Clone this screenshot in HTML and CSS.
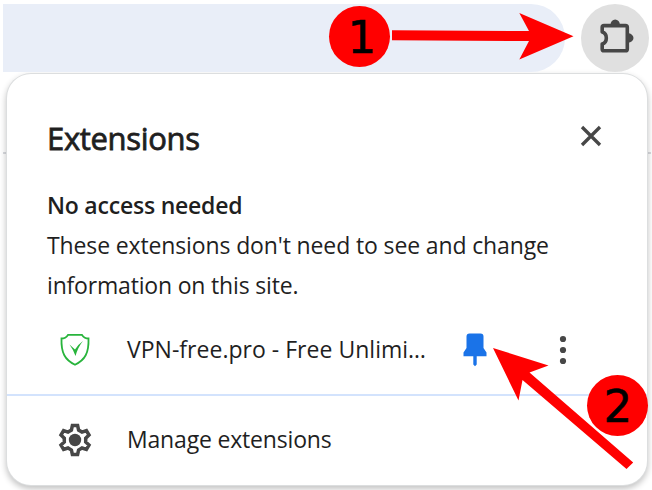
FILE: index.html
```html
<!DOCTYPE html>
<html lang="en">
<head>
<meta charset="utf-8">
<title>Extensions</title>
<link rel="stylesheet" href="styles.css">
</head>
<body>
<header class="toolbar">
  <div class="omnibox"></div>
  <div class="ext-button">
    <svg width="68" height="68" viewBox="581 4 68 68">
      <path d="M604 25.600h21.500q1.800 0 1.800 1.800v21.500q0 1.800-1.800 1.800h-21.500q-1.800 0-1.800-1.800v-5c5.500-1.500 5.500-10.500 0-12v-4.500q0-1.800 1.800-1.800z" fill="none" stroke="#474747" stroke-width="3.600" stroke-linejoin="round"/>
      <path d="M610.500 25a4.700 5.500 0 0 1 9.400 0zM628 33.300a5.500 4.700 0 0 1 0 9.400z" fill="#474747"/>
    </svg>
  </div>
</header>
<main class="popup">
  <div class="head">
    <h1>Extensions</h1>
    <svg class="close" width="24" height="24" viewBox="0 0 24 24"><path d="M3 3l18 18M21 3l-18 18" stroke="#474747" stroke-width="3.300"/></svg>
  </div>
  <section class="access">
    <h2>No access needed</h2>
    <p class="l1">These extensions don't need to see and change</p>
    <p class="l2">information on this site.</p>
  </section>
  <div class="row ext">
    <svg class="icon" width="34" height="36" viewBox="58 332 34 36">
      <path d="M75 364.700C65 360 61 353 61.500 338.500Q65.500 338.500 68 334.900H82Q84.500 338.500 88.500 338.500C89 353 85 360 75 364.700Z" fill="none" stroke="#28b43c" stroke-width="1.800"/>
      <path d="M69.500 344.500l5.500 5q3-5 8-8.500q-5 6-7.500 15q-2-6-6-11.500z" fill="#28b43c"/>
    </svg>
    <span class="label vpn">VPN-free.pro - Free Unlimi…</span>
    <svg class="pin" width="24" height="34" viewBox="463 333 24 34">
      <path d="M469.500 333.500h11q3 0 3 3V348l3 4.500v3.800h-9.800v8.200l-1.700 1.800-1.700-1.800v-8.200h-9.800v-3.800l3-4.500v-11.500q0-3 3-3z" fill="#1a73e8"/>
    </svg>
    <svg class="more" width="8" height="30" viewBox="0 0 8 30"><g fill="#474747"><circle cx="4" cy="4" r="3.100"/><circle cx="4" cy="15" r="3.100"/><circle cx="4" cy="26" r="3.100"/></g></svg>
  </div>
  <div class="row manage">
    <svg class="icon" width="34" height="36" viewBox="58 422 34 36">
      <path d="M72.400 425.500h5.200l1 4.600 3.400 2 4.400-1.500 2.600 4.400-3.300 3.200v3.700l3.300 3.200-2.600 4.300-4.400-1.400-3.400 2-1 4.500h-5.200l-1-4.500-3.400-2-4.400 1.400-2.600-4.300 3.300-3.200v-3.700l-3.300-3.200 2.600-4.400 4.400 1.500 3.400-2z" fill="none" stroke="#474747" stroke-width="3.500"/>
      <circle cx="75" cy="440" r="6.200" fill="#474747"/>
    </svg>
    <span class="label mng">Manage extensions</span>
  </div>
</main>
<div class="notes">
  <svg width="652" height="490" viewBox="0 0 652 490">
    <g fill="#f00">
      <circle cx="359.500" cy="36.500" r="30.500"/>
      <path d="M392 30.300L529 31 519.300 13 573.500 36.200 519.300 59.500 529 41 392 40.300z"/>
      <circle cx="617.500" cy="405.500" r="30.500"/>
      <path d="M493 348L548.500 365.500 529.500 372.500 633.200 462.500 626.500 469 522.500 380 518.500 400.500z"/>
    </g>
    <text class="num" x="347.500" y="52.500">1</text>
    <text class="num" x="603.500" y="422">2</text>
  </svg>
</div>
</body>
</html>
```
FILE: styles.css
```css
* { box-sizing: border-box; }
body {
  margin: 0;
  width: 652px;
  height: 490px;
  overflow: hidden;
  background: linear-gradient(#d9dbdf, #d9dbdf) 3px 152px / 648px 2px no-repeat #fff;
  color: #1f1f1f;
  font-family: "Open Sans", "Noto Sans", sans-serif;
  font-size: 23px;
}
.toolbar {
  display: flex;
  height: 73px;
  padding: 4px 3px 1px;
  justify-content: space-between;
}
.omnibox {
  width: 562px;
  height: 68px;
  border-radius: 0 34px 34px 0;
  background: #e9eef8;
}
.ext-button {
  width: 68px;
  height: 68px;
  border-radius: 50%;
  background: #e0e0e0;
}
.ext-button svg { display: block; }
.popup {
  width: 640px;
  height: 411px;
  margin: 1px 0 0 7px;
  border-radius: 24px;
  background: #fff;
  box-shadow: 0 0 0 1px #dcdedf, 0 3px 6px 1px rgba(0, 0, 0, .24);
}
.head {
  display: flex;
  height: 111px;
  padding: 44px 44px 0 40px;
  justify-content: space-between;
}
h1, h2, p { margin: 0; white-space: nowrap; }
h1 {
  font-size: 31px;
  line-height: 40px;
  font-weight: 400;
  letter-spacing: -.33px;
  -webkit-text-stroke: .8px #1f1f1f;
}
.close { margin-top: 6px; }
.access { padding-left: 40px; line-height: 40px; }
h2 { font-size: 23px; font-weight: 600; line-height: 40px; letter-spacing: -.22px; }
.l1 { letter-spacing: -.13px; }
.l2 { letter-spacing: -.18px; }
.row { display: flex; align-items: center; }
.ext { height: 91px; border-bottom: 2px solid #d3e3fd; }
.manage { height: 88px; }
.icon { margin-left: 51px; flex: none; }
.label { margin-left: 35px; white-space: nowrap; flex: none; position: relative; top: -1px; }
.vpn { width: 300px; letter-spacing: .02px; }
.mng { letter-spacing: -.18px; }
.pin { margin-left: 36px; }
.more { margin-left: 72px; }
.notes { position: absolute; left: 0; top: 0; }
.notes svg { display: block; }
.num { font-family: "DejaVu Sans", sans-serif; font-size: 45px; stroke: #000; stroke-width: .6px; }
```
